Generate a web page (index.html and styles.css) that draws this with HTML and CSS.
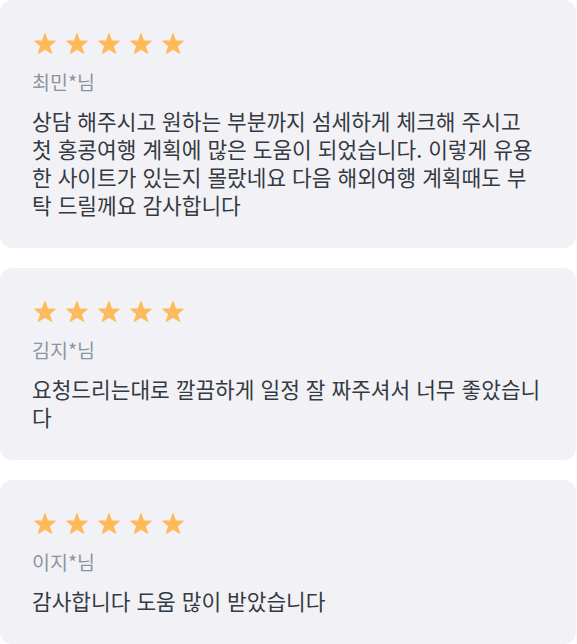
FILE: index.html
```html
<!DOCTYPE html>
<html lang="ko">
<head>
<meta charset="utf-8">
<link rel="stylesheet" href="styles.css">
</head>
<body>
<svg class="defs" width="0" height="0" aria-hidden="true">
  <defs>
    <symbol id="star" viewBox="0 0 22 21">
      <polygon points="11,0.8 13.6,7.99 21.2,8.1 15.2,12.94 17.5,20.2 11,15.99 4.5,20.2 6.8,12.94 0.8,8.1 8.4,7.99" fill="#FFBA5C" stroke="#FFBA5C" stroke-width="1.2" stroke-linejoin="round"/>
    </symbol>
  </defs>
</svg>
<div class="list">
  <div class="card">
    <div class="stars">
      <svg class="star"><use href="#star"/></svg>
      <svg class="star"><use href="#star"/></svg>
      <svg class="star"><use href="#star"/></svg>
      <svg class="star"><use href="#star"/></svg>
      <svg class="star"><use href="#star"/></svg>
    </div>
    <div class="name">최민*님</div>
    <p class="text">상담 해주시고 원하는 부분까지 섬세하게 체크해 주시고 첫 홍콩여행 계획에 많은 도움이 되었습니다. 이렇게 유용한 사이트가 있는지 몰랐네요 다음 해외여행 계획때도 부탁 드릴께요 감사합니다</p>
  </div>
  <div class="card">
    <div class="stars">
      <svg class="star"><use href="#star"/></svg>
      <svg class="star"><use href="#star"/></svg>
      <svg class="star"><use href="#star"/></svg>
      <svg class="star"><use href="#star"/></svg>
      <svg class="star"><use href="#star"/></svg>
    </div>
    <div class="name">김지*님</div>
    <p class="text">요청드리는대로 깔끔하게 일정 잘 짜주셔서 너무 좋았습니다</p>
  </div>
  <div class="card">
    <div class="stars">
      <svg class="star"><use href="#star"/></svg>
      <svg class="star"><use href="#star"/></svg>
      <svg class="star"><use href="#star"/></svg>
      <svg class="star"><use href="#star"/></svg>
      <svg class="star"><use href="#star"/></svg>
    </div>
    <div class="name">이지*님</div>
    <p class="text">감사합니다 도움 많이 받았습니다</p>
  </div>
</div>
</body>
</html>
```

FILE: styles.css
```css
html, body {
  margin: 0;
  padding: 0;
  background: #ffffff;
}
body {
  font-family: "Noto Sans CJK KR", "Noto Sans", sans-serif;
}
.defs {
  position: absolute;
  width: 0;
  height: 0;
}
.list {
  width: 576px;
  display: flex;
  flex-direction: column;
  gap: 20px;
}
.card {
  background: #f2f2f6;
  border-radius: 12px;
  padding: 33px 32px 29px 32px;
}
.stars {
  display: flex;
  gap: 10px;
  height: 22px;
  padding-left: 2px;
}
.star {
  width: 22px;
  height: 21px;
}
.name {
  margin-top: 14px;
  font-size: 19.5px;
  line-height: 26px;
  color: #8b95a1;
}
.text {
  margin: 12px 0 0 0;
  font-size: 21.4px;
  line-height: 28px;
  color: #343a42;
}
```
